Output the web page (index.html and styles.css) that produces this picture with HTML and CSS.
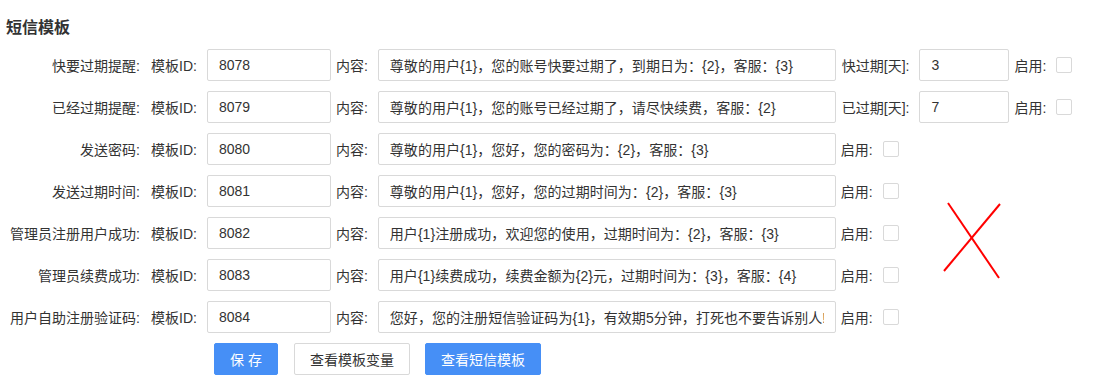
FILE: index.html
```html
<!DOCTYPE html>
<html lang="zh">
<head>
<meta charset="utf-8">
<title>短信模板</title>
<link rel="stylesheet" href="styles.css">
</head>
<body>
<div class="page">
  <h2 class="title">短信模板</h2>

  <div class="row">
    <span class="row-label">快要过期提醒:</span>
    <span class="lbl lbl-first">模板ID:</span>
    <input class="inp inp-id" type="text" value="8078">
    <span class="lbl">内容:</span>
    <input class="inp inp-content" type="text" value="尊敬的用户{1}，您的账号快要过期了，到期日为：{2}，客服：{3}">
    <span class="lbl lbl-days">快过期[天]:</span>
    <input class="inp inp-days" type="text" value="3">
    <span class="lbl">启用:</span>
    <input class="chk" type="checkbox">
  </div>

  <div class="row">
    <span class="row-label">已经过期提醒:</span>
    <span class="lbl lbl-first">模板ID:</span>
    <input class="inp inp-id" type="text" value="8079">
    <span class="lbl">内容:</span>
    <input class="inp inp-content" type="text" value="尊敬的用户{1}，您的账号已经过期了，请尽快续费，客服：{2}">
    <span class="lbl lbl-days">已过期[天]:</span>
    <input class="inp inp-days" type="text" value="7">
    <span class="lbl">启用:</span>
    <input class="chk" type="checkbox">
  </div>

  <div class="row">
    <span class="row-label">发送密码:</span>
    <span class="lbl lbl-first">模板ID:</span>
    <input class="inp inp-id" type="text" value="8080">
    <span class="lbl">内容:</span>
    <input class="inp inp-content" type="text" value="尊敬的用户{1}，您好，您的密码为：{2}，客服：{3}">
    <span class="lbl">启用:</span>
    <input class="chk" type="checkbox">
  </div>

  <div class="row">
    <span class="row-label">发送过期时间:</span>
    <span class="lbl lbl-first">模板ID:</span>
    <input class="inp inp-id" type="text" value="8081">
    <span class="lbl">内容:</span>
    <input class="inp inp-content" type="text" value="尊敬的用户{1}，您好，您的过期时间为：{2}，客服：{3}">
    <span class="lbl">启用:</span>
    <input class="chk" type="checkbox">
  </div>

  <div class="row">
    <span class="row-label">管理员注册用户成功:</span>
    <span class="lbl lbl-first">模板ID:</span>
    <input class="inp inp-id" type="text" value="8082">
    <span class="lbl">内容:</span>
    <input class="inp inp-content" type="text" value="用户{1}注册成功，欢迎您的使用，过期时间为：{2}，客服：{3}">
    <span class="lbl">启用:</span>
    <input class="chk" type="checkbox">
  </div>

  <div class="row">
    <span class="row-label">管理员续费成功:</span>
    <span class="lbl lbl-first">模板ID:</span>
    <input class="inp inp-id" type="text" value="8083">
    <span class="lbl">内容:</span>
    <input class="inp inp-content" type="text" value="用户{1}续费成功，续费金额为{2}元，过期时间为：{3}，客服：{4}">
    <span class="lbl">启用:</span>
    <input class="chk" type="checkbox">
  </div>

  <div class="row">
    <span class="row-label">用户自助注册验证码:</span>
    <span class="lbl lbl-first">模板ID:</span>
    <input class="inp inp-id" type="text" value="8084">
    <span class="lbl">内容:</span>
    <input class="inp inp-content" type="text" value="您好，您的注册短信验证码为{1}，有效期5分钟，打死也不要告诉别人!">
    <span class="lbl">启用:</span>
    <input class="chk" type="checkbox">
  </div>

  <div class="actions">
    <button class="btn btn-primary btn-save">保 存</button>
    <button class="btn btn-default">查看模板变量</button>
    <button class="btn btn-primary">查看短信模板</button>
  </div>

  <svg class="cross" width="70" height="90" viewBox="0 0 70 90">
    <line x1="8" y1="3" x2="59" y2="78" stroke="#ff0000" stroke-width="2"/>
    <line x1="60" y1="4" x2="4" y2="71" stroke="#ff0000" stroke-width="2"/>
  </svg>
</div>
</body>
</html>
```

FILE: styles.css
```css
* { box-sizing: border-box; }

html, body {
  margin: 0;
  padding: 0;
  background: #fff;
}

body {
  font-family: "Liberation Sans", "Noto Sans CJK SC", sans-serif;
  font-size: 14px;
  color: #333;
}

.page {
  position: relative;
  padding: 18px 0 0 6px;
  width: 1103px;
  height: 383px;
}

.title {
  margin: 0 0 11px 0;
  font-size: 16px;
  line-height: 20px;
  font-weight: bold;
  color: #333;
}

.row {
  display: flex;
  align-items: center;
  height: 32px;
  margin-bottom: 10px;
}

.row-label {
  width: 134px;
  text-align: right;
  white-space: nowrap;
  flex: none;
}

.lbl {
  flex: none;
  margin: 0 10px 0 5px;
  white-space: nowrap;
}

.lbl-first {
  margin-left: 11px;
}

.lbl-days {
  margin-left: 6px;
}

.inp {
  flex: none;
  height: 32px;
  border: 1px solid #d9d9d9;
  border-radius: 2px;
  padding: 0 11px;
  font-family: "Liberation Sans", "Noto Sans CJK SC", sans-serif;
  font-size: 14px;
  color: #333;
  background: #fff;
  outline: none;
}

.inp-id { width: 124px; }
.inp-content { width: 458px; letter-spacing: 0.05px; }
.inp-days { width: 90px; }

.chk {
  appearance: none;
  -webkit-appearance: none;
  flex: none;
  width: 16px;
  height: 16px;
  margin: 0;
  border: 1px solid #d9d9d9;
  border-radius: 2px;
  background: #fff;
}

.actions {
  display: flex;
  gap: 15px;
  padding-left: 208px;
}

.btn {
  height: 32px;
  border-radius: 2px;
  font-family: "Liberation Sans", "Noto Sans CJK SC", sans-serif;
  font-size: 14px;
  padding: 0;
  width: 116px;
  cursor: pointer;
}

.btn-save {
  width: 64px;
  margin-right: 1px;
}

.btn-primary {
  background: #468ff6;
  border: 1px solid #468ff6;
  color: #fff;
}

.btn-default {
  background: #fff;
  border: 1px solid #d9d9d9;
  color: #333;
}

.cross {
  position: absolute;
  left: 940px;
  top: 200px;
}
```
